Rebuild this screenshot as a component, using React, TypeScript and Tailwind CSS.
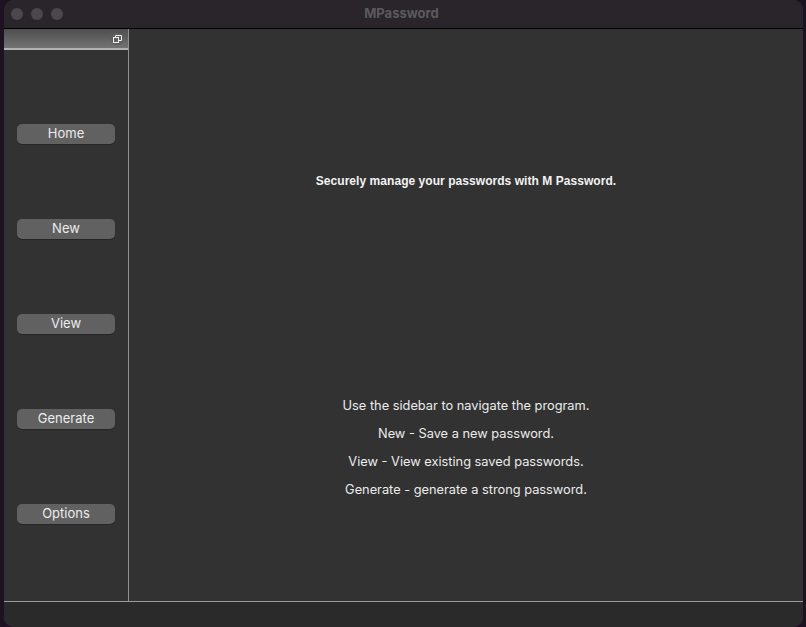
import React from 'react';

const navItems = ['Home', 'New', 'View', 'Generate', 'Options'];

const helpLines = [
  'Use the sidebar to navigate the program.',
  'New - Save a new password.',
  'View - View existing saved passwords.',
  'Generate - generate a strong password.',
];

export default function App() {
  return (
    <div className="w-[806px] h-[627px] bg-[#1c1222] overflow-hidden" style={{ fontFamily: 'Inter, "Open Sans", sans-serif' }}>
      <div className="ml-[4px] w-[799px] h-[627px] flex flex-col rounded-[10px] overflow-hidden bg-[#323232]">
        {/* Title bar */}
        <div className="relative h-[29px] shrink-0 bg-[#29252b] border-b border-black flex items-center">
          <div className="flex gap-[8px] pl-[7px]">
            <span className="w-[12px] h-[12px] rounded-full bg-[#4b474d]" />
            <span className="w-[12px] h-[12px] rounded-full bg-[#4b474d]" />
            <span className="w-[12px] h-[12px] rounded-full bg-[#4b474d]" />
          </div>
          <div className="absolute inset-0 flex items-center justify-center text-[13px] font-bold text-[#5d595f] pr-[4px]">
            MPassword
          </div>
        </div>

        {/* Body */}
        <div className="flex flex-1 min-h-0">
          {/* Sidebar */}
          <div className="w-[125px] shrink-0 border-r border-[#8f8f8f] flex flex-col">
            <div className="h-[21px] shrink-0 bg-gradient-to-b from-[#4e4e4e] to-[#737373] border-b-2 border-[#b4b4b4] flex items-center justify-end pr-[5px]">
              <div className="w-[12px] h-[12px] rounded-full bg-[#5e5e5e] flex items-center justify-center">
                <svg width="9" height="8" viewBox="0 0 9 8" fill="none" stroke="#f0f0f0" strokeWidth="1">
                  <rect x="0.5" y="2.5" width="5" height="5" />
                  <path d="M2.5 2.5V0.5h6v5h-3" />
                </svg>
              </div>
            </div>
            <div className="flex flex-col items-start gap-[75px] pt-[74px] pl-[13px]">
              {navItems.map((item) => (
                <button
                  key={item}
                  className="w-[98px] h-[20px] rounded-[5px] bg-[#616161] text-[13px] text-[#ececec] leading-none flex items-center justify-center pb-[1px] shadow-[0_1px_0_rgba(0,0,0,0.25)]"
                >
                  {item}
                </button>
              ))}
            </div>
          </div>

          {/* Main */}
          <div className="flex-1 flex flex-col items-center text-[#f2f2f2]">
            <p className="mt-[143px] text-[12px] font-bold tracking-[0.05px]" style={{ fontFamily: '"Liberation Sans", "Noto Sans", sans-serif' }}>
              Securely manage your passwords with M Password.
            </p>
            <div className="mt-[208px] flex flex-col items-center gap-[12px] text-[12.8px] leading-[16px] text-[#ececec]">
              {helpLines.map((line) => (
                <p key={line}>{line}</p>
              ))}
            </div>
          </div>
        </div>

        {/* Status bar */}
        <div className="h-[26px] shrink-0 border-t border-[#9a9a9a] bg-[#2a2a2a]" />
      </div>
    </div>
  );
}
